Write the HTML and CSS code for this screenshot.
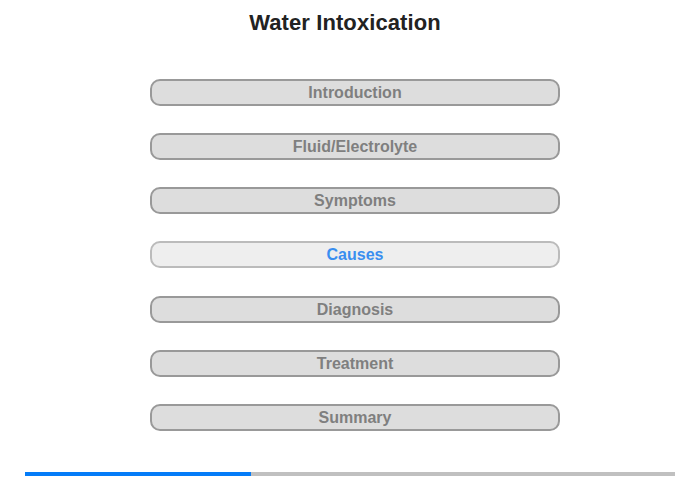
FILE: index.html
```html
<!DOCTYPE html>
<html>
<head>
<meta charset="utf-8">
<link rel="stylesheet" href="styles.css">
</head>
<body>
<div class="page">
  <h1 class="title">Water Intoxication</h1>
  <nav class="menu">
    <div class="item">Introduction</div>
    <div class="item">Fluid/Electrolyte</div>
    <div class="item">Symptoms</div>
    <div class="item active">Causes</div>
    <div class="item">Diagnosis</div>
    <div class="item">Treatment</div>
    <div class="item">Summary</div>
  </nav>
  <div class="progress"><div class="fill" style="width:34.8%"></div></div>
</div>
</body>
</html>
```
FILE: styles.css
```css
html, body { margin: 0; padding: 0; background: #fff; }
body { font-family: "Liberation Sans", Arial, sans-serif; }
.page { width: 700px; height: 480px; display: flex; flex-direction: column; }
.title {
  margin: 10px 0 0 0;
  text-align: center;
  font-size: 22px;
  font-weight: bold;
  color: #222;
  line-height: 26px;
  padding-right: 10px;
  letter-spacing: 0.1px;
}
.menu {
  margin: 43px 0 0 150px;
  width: 410px;
  display: flex;
  flex-direction: column;
  gap: 27.17px;
}
.item {
  box-sizing: border-box;
  height: 27px;
  border: 2px solid #999;
  border-radius: 10px;
  background: #ddd;
  color: #7f7f7f;
  font-size: 16px;
  font-weight: bold;
  line-height: 23px;
  text-align: center;
}
.item.active {
  background: #eee;
  border-color: #bbb;
  color: #3a8ef0;
}
.progress {
  margin: auto 25px 4px 25px;
  height: 4px;
  background: #c0c0c0;
}
.fill { height: 100%; background: #047cf8; }
```
